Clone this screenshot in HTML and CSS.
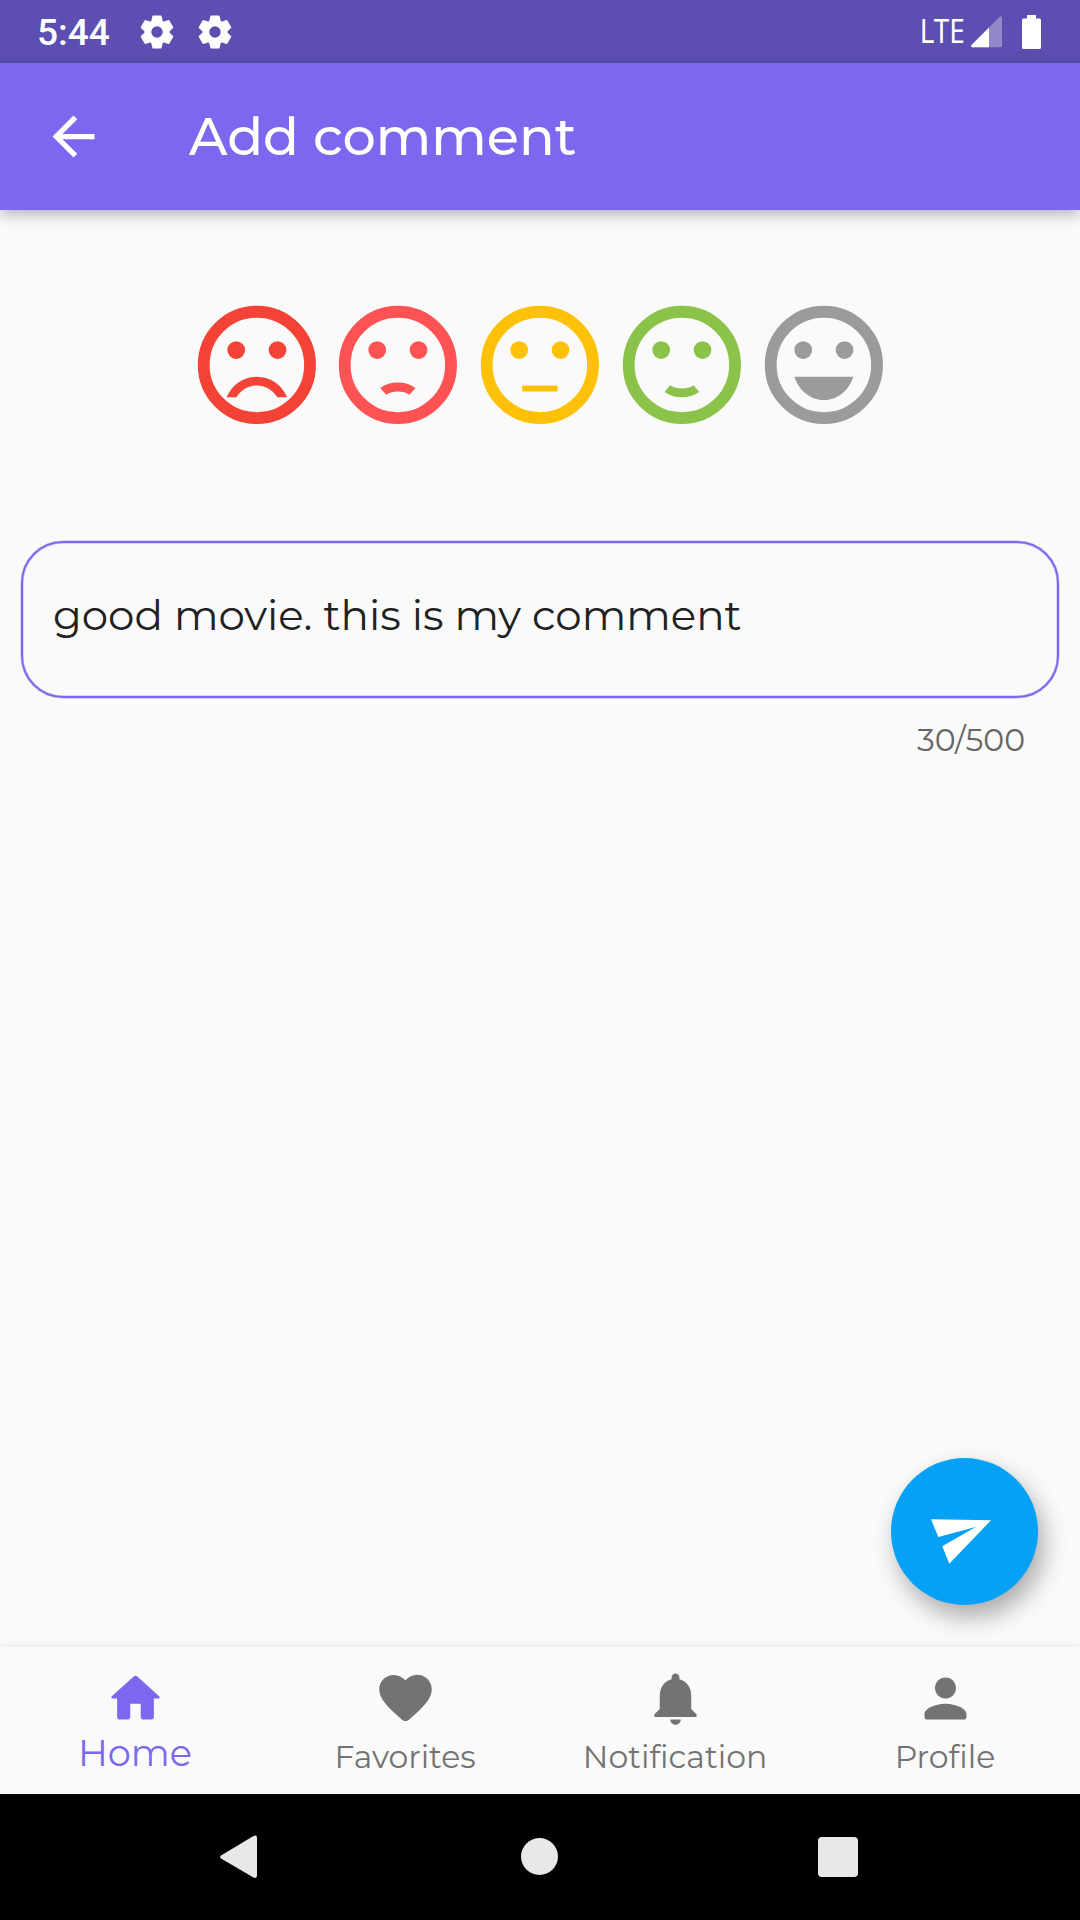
FILE: index.html
```html
<!DOCTYPE html>
<html lang="en">
<head>
<meta charset="utf-8">
<title>Add comment</title>
<link rel="stylesheet" href="styles.css">
</head>
<body>
<div class="screen">
  <header class="status">
    <span class="time">5:44</span>
    <svg class="gear" viewBox="-18 -18 36 36"><use href="#gear"/></svg>
    <svg class="gear" viewBox="-18 -18 36 36">
      <g id="gear">
        <circle r="9" fill="none" stroke="#fff" stroke-width="6.6"/>
        <g fill="#fff" stroke="#fff" stroke-width="1.6" stroke-linejoin="round">
          <path id="tooth" d="M-5-10.5-3.8-15.7H3.8L5-10.5z"/>
          <use href="#tooth" transform="rotate(60)"/><use href="#tooth" transform="rotate(120)"/><use href="#tooth" transform="rotate(180)"/><use href="#tooth" transform="rotate(240)"/><use href="#tooth" transform="rotate(300)"/>
        </g>
      </g>
    </svg>
    <span class="lte">LTE</span>
    <svg class="signal" viewBox="0 0 31 32"><path d="M29 .5Q31-.5 31 2V29.500Q31 31.300 29 31.300H1.500Q-.5 31 .5 29z" fill="#fff" fill-opacity=".33"/><path d="M18 11.500V31.300H1.500Q-.5 31 .5 29z" fill="#fff"/></svg>
    <svg class="battery" viewBox="0 0 19 34"><path d="M5 0h9v3.500h3.500Q19 3.500 19 5V32.500Q19 34 17.500 34h-16Q0 34 0 32.500V5Q0 3.500 1.500 3.500H5z" fill="#fff"/></svg>
  </header>
  <div class="appbar">
    <svg class="icon" viewBox="0 0 24 24"><path d="M20 11H7.830l5.590-5.590L12 4l-8 8 8 8 1.410-1.410L7.830 13H20z"/></svg>
    <h1 class="title">Add comment</h1>
  </div>
  <main class="content">
    <div class="ratings">
      <svg class="face awful" viewBox="0 0 24 24"><g id="face"><circle cx="12" cy="12" r="9" fill="none" stroke="currentColor" stroke-width="2"/><circle cx="8.500" cy="9.500" r="1.500"/><circle cx="15.500" cy="9.500" r="1.500"/></g><path d="M12 14c-2.330 0-4.320 1.450-5.120 3.500h1.670c.69-1.190 1.970-2 3.450-2s2.750.81 3.450 2h1.670c-.8-2.050-2.790-3.500-5.120-3.500z"/></svg>
      <svg class="face bad" viewBox="0 0 24 24"><use href="#face"/><path d="M9 15.900C9.900 15.300 10.900 15 12 15s2.100.3 3 .9l-1.050 1.150C13.400 16.700 12.700 16.500 12 16.500s-1.400.2-1.950.55z"/></svg>
      <svg class="face okay" viewBox="0 0 24 24"><use href="#face"/><path d="M9 15.500h6v1H9z"/></svg>
      <svg class="face good" viewBox="0 0 24 24"><use href="#face"/><path d="M9.050 16.600C9.900 17.200 10.900 17.500 12 17.500s2.100-.3 2.950-.9L14 15.450C13.400 15.850 12.700 16 12 16s-1.400-.15-2-.55z"/></svg>
      <svg class="face great" viewBox="0 0 24 24"><use href="#face"/><path d="M7 14c.78 2.340 2.720 3.950 5 3.950s4.220-1.610 5-3.950z"/></svg>
    </div>
    <div class="field">good movie. this is my comment</div>
    <div class="counter">30/500</div>
    <button class="fab" aria-label="Send"><svg viewBox="0 0 147 147"><path d="M40 61.300 100 62.300 58.300 105.700 51.300 88.300 84.700 69 47.300 79z" fill="#fff"/></svg></button>
  </main>
  <nav class="tabs">
    <div class="tab active"><svg class="icon" viewBox="0 0 24 24"><path d="M10 19v-5h4v5c0 .55.45 1 1 1h3c.55 0 1-.45 1-1v-7h1.700c.46 0 .68-.57.33-.87L12.670 3.600c-.38-.34-.96-.34-1.340 0l-8.360 7.530c-.34.3-.13.87.33.87H5v7c0 .55.45 1 1 1h3c.55 0 1-.45 1-1z"/></svg><span class="label">Home</span></div>
    <div class="tab"><svg class="icon" viewBox="0 0 24 24"><path d="M13.350 20.130c-.76.69-1.930.69-2.690-.01l-.11-.1C5.300 15.270 1.870 12.160 2 8.280c.06-1.700.93-3.330 2.340-4.290 2.640-1.800 5.900-.96 7.660 1.100 1.760-2.060 5.020-2.910 7.660-1.100 1.410.96 2.280 2.590 2.340 4.290.14 3.880-3.300 6.990-8.550 11.760z"/></svg><span class="label">Favorites</span></div>
    <div class="tab"><svg class="icon" viewBox="0 0 24 24"><path d="M12 22c1.100 0 2-.9 2-2h-4c0 1.100.9 2 2 2zm6-6v-5c0-3.070-1.630-5.640-4.500-6.320V4c0-.83-.67-1.500-1.500-1.500s-1.500.67-1.500 1.500v.68C7.640 5.360 6 7.920 6 11v5l-2 2v1h16v-1z"/></svg><span class="label">Notification</span></div>
    <div class="tab"><svg class="icon" viewBox="0 0 24 24"><path d="M12 12c2.210 0 4-1.790 4-4s-1.790-4-4-4-4 1.790-4 4 1.790 4 4 4zm0 2c-2.670 0-8 1.340-8 4v1c0 .55.45 1 1 1h14c.55 0 1-.45 1-1v-1c0-2.660-5.330-4-8-4z"/></svg><span class="label">Profile</span></div>
  </nav>
  <footer class="system">
    <svg viewBox="0 0 60 60"><path d="M11 28.500 43.500 9Q47 7.500 47 11V48.500Q47 52 43.500 50.500L11 31.500Q9.200 30 11 28.500z"/></svg>
    <svg viewBox="0 0 60 60"><circle cx="29.500" cy="29.500" r="18.500"/></svg>
    <svg viewBox="0 0 60 60"><rect x="8" y="10" width="40" height="40" rx="4"/></svg>
  </footer>
</div>
</body>
</html>
```
FILE: styles.css
```css
* { box-sizing: border-box; }
body { margin: 0; background: #fafafa; font-family: Montserrat, Inter, sans-serif; font-weight: 400; }
svg { display: block; flex: none; }
.screen { width: 1080px; height: 1920px; display: flex; flex-direction: column; overflow: hidden; }

.status { height: 63px; flex: none; display: flex; align-items: center; padding: 0 39px 0 37px; background: #5c4fb1; color: #fff; }
.time { width: 102px; font: 500 37px/44px Roboto, sans-serif; padding-top: 2px; }
.gear { width: 36px; height: 36px; margin-right: 22px; }
.lte { margin-left: auto; padding-bottom: 2px; font: 400 32px/38px "Noto Sans", sans-serif; transform: scaleX(.87); transform-origin: right; }
.signal { width: 31px; height: 32px; margin: 0 20px 0 6px; }
.battery { width: 19px; height: 34px; }

.icon { width: 63px; height: 63px; fill: currentColor; }
.appbar { height: 147px; flex: none; display: flex; align-items: center; padding-left: 42px; background: #7b68ee; color: #fff; box-shadow: 0 4px 14px rgba(0, 0, 0, .3); z-index: 1; }
.title { margin: 0 0 2px 84px; font-size: 52.500px; line-height: 60px; font-weight: 500; }

.content { flex: 1; display: flex; flex-direction: column; }
.ratings { display: flex; justify-content: center; padding-top: 84px; }
.face { width: 141.75px; height: 141.75px; fill: currentColor; }
.awful { color: #f44336; }
.bad { color: #ff5252; }
.okay { color: #ffc107; }
.good { color: #8bc34a; }
.great { color: #9b9b9b; }
.field { height: 157px; margin: 105px 21px 0; padding: 46px 30px; border: 2px solid #7b68ee; border-radius: 42px; box-shadow: 0 0 0 .5px rgba(123, 104, 238, .5), inset 0 0 0 .5px rgba(123, 104, 238, .5); font-size: 42px; line-height: 52px; color: #212121; }
.counter { margin: 22px 55px 0 0; text-align: right; font-size: 31.500px; line-height: 40px; color: #666; }
.fab { width: 147px; height: 147px; margin: auto 42px 42px auto; padding: 0; border: 0; border-radius: 50%; background: #05a1f7; box-shadow: 6px 12px 24px rgba(0, 0, 0, .32); }

.tabs { height: 147px; flex: none; display: grid; grid-template-columns: repeat(4, 1fr); background: #fafafa; box-shadow: 0 -1px 8px rgba(0, 0, 0, .08); color: #737373; font-variant-ligatures: none; }
.tab { display: flex; flex-direction: column; align-items: center; padding-top: 20px; font-size: 31.500px; line-height: 36px; }
.label { margin-top: 9px; }
.active { color: #7b68ee; font-size: 36.750px; }
.active .label { margin-top: 5px; }

.system { height: 126px; flex: none; display: flex; justify-content: center; gap: 240px; padding-top: 33px; background: #000; fill: #e8e8e8; }
.system svg { width: 60px; height: 60px; }
```
